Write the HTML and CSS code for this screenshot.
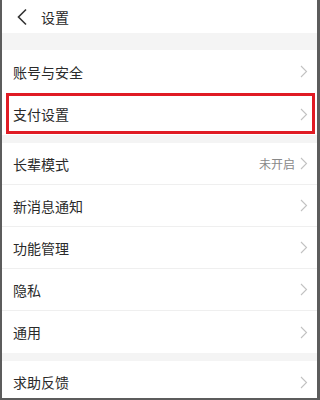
FILE: index.html
```html
<!DOCTYPE html>
<html lang="zh">
<head>
<meta charset="utf-8">
<link rel="stylesheet" href="styles.css">
</head>
<body>
<div class="frame">
  <header class="header">
    <svg class="back" width="12" height="18" viewBox="0 0 12 18"><path d="M10 1.5 L2.5 9 L10 16.5" fill="none" stroke="#333" stroke-width="1.6"/></svg>
    <span class="title">设置</span>
  </header>
  <div class="gap gap-top"></div>
  <div class="row first"><span class="label">账号与安全</span><svg class="chev" width="8" height="13" viewBox="0 0 8 13"><path d="M1 1 L6.5 6.5 L1 12" fill="none" stroke="#c2c2c2" stroke-width="1.1"/></svg></div>
  <div class="row highlight"><span class="label">支付设置</span><svg class="chev" width="8" height="13" viewBox="0 0 8 13"><path d="M1 1 L6.5 6.5 L1 12" fill="none" stroke="#c2c2c2" stroke-width="1.1"/></svg></div>
  <div class="gap"></div>
  <div class="row line"><span class="label">长辈模式</span><span class="value">未开启</span><svg class="chev" width="8" height="13" viewBox="0 0 8 13"><path d="M1 1 L6.5 6.5 L1 12" fill="none" stroke="#c2c2c2" stroke-width="1.1"/></svg></div>
  <div class="row line"><span class="label">新消息通知</span><svg class="chev" width="8" height="13" viewBox="0 0 8 13"><path d="M1 1 L6.5 6.5 L1 12" fill="none" stroke="#c2c2c2" stroke-width="1.1"/></svg></div>
  <div class="row line"><span class="label">功能管理</span><svg class="chev" width="8" height="13" viewBox="0 0 8 13"><path d="M1 1 L6.5 6.5 L1 12" fill="none" stroke="#c2c2c2" stroke-width="1.1"/></svg></div>
  <div class="row line"><span class="label">隐私</span><svg class="chev" width="8" height="13" viewBox="0 0 8 13"><path d="M1 1 L6.5 6.5 L1 12" fill="none" stroke="#c2c2c2" stroke-width="1.1"/></svg></div>
  <div class="row"><span class="label">通用</span><svg class="chev" width="8" height="13" viewBox="0 0 8 13"><path d="M1 1 L6.5 6.5 L1 12" fill="none" stroke="#c2c2c2" stroke-width="1.1"/></svg></div>
  <div class="gap"></div>
  <div class="row"><span class="label">求助反馈</span><svg class="chev" width="8" height="13" viewBox="0 0 8 13"><path d="M1 1 L6.5 6.5 L1 12" fill="none" stroke="#c2c2c2" stroke-width="1.1"/></svg></div>
</div>
</body>
</html>
```
FILE: styles.css
```css
html, body { margin: 0; padding: 0; }
body {
  width: 320px; height: 400px; overflow: hidden;
  font-family: "Noto Sans CJK SC", "Noto Sans", sans-serif;
  background: #fff;
}
.frame {
  box-sizing: border-box;
  width: 320px; height: 400px; overflow: hidden;
  border-left: 2px solid #5c5c5c;
  border-right: 3px solid #5c5c5c;
  border-bottom: 2px solid #5c5c5c;
  display: flex; flex-direction: column;
}
.header {
  height: 33px; flex: none;
  display: flex; align-items: center;
  padding-left: 14px;
}
.back { display: block; margin-right: 13px; }
.title { font-size: 14px; color: #2a2a2a; }
.gap { height: 8px; flex: none; background: #f4f4f4; }
.gap-top { height: 17px; }
.row {
  flex: none; height: 42px; box-sizing: border-box;
  display: flex; align-items: center;
  padding: 0 9px 0 11px;
  position: relative;
}
.row.first { height: 43px; }
.row.line { border-bottom: 1px solid #efefef; }
.label { font-size: 14px; color: #2a2a2a; flex: 1; }
.value { font-size: 12px; color: #888; margin-right: 5px; }
.chev { display: block; }
.highlight::after {
  content: ""; position: absolute;
  left: 4px; right: 2px; top: 0; bottom: 1px;
  border: 3px solid #e01b24;
}
```
